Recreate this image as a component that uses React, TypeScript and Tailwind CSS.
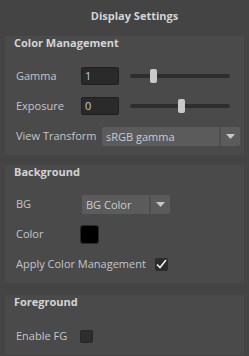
import React from 'react';

const Label = ({ children, w = 'w-[65px]' }: { children: React.ReactNode; w?: string }) => (
  <span className={`${w} shrink-0 text-[11px] text-[#c3c7cb]`}>{children}</span>
);

const NumField = ({ value }: { value: string }) => (
  <div className="w-[38px] h-[18px] bg-[#2a2a2a] border border-[#1f1f1f] rounded-[2px] text-[11px] leading-[16px] pl-[3px] text-[#c8cdd2]">
    {value}
  </div>
);

const Slider = ({ pos }: { pos: number }) => (
  <div className="relative ml-[11px] w-[100px] h-[14px] flex items-center">
    <div className="w-full h-[4px] rounded-full bg-[#2e2e2e]" />
    <div
      className="absolute top-0 w-[7px] h-[14px] rounded-[2px] bg-[#c9c9c9]"
      style={{ left: pos }}
    />
  </div>
);

const Dropdown = ({ text, width }: { text: string; width: string }) => (
  <div className={`${width} h-[19px] flex rounded-[2px] bg-[#5b5b5b] text-[11px] text-[#c8cdd2]`}>
    <span className="flex-1 pl-[4px] leading-[19px] border-r-2 border-[#4f4f4f]">{text}</span>
    <span className="w-[19px] flex items-center justify-center">
      <svg width="9" height="5" viewBox="0 0 9 5">
        <path d="M0 0H9L4.5 5Z" fill="#c8c8c8" />
      </svg>
    </span>
  </div>
);

const Group = ({ title, children, extra }: { title: string; children: React.ReactNode; extra: string }) => (
  <div className={`bg-[#4a4a4a] ${extra}`}>
    <div className="-mt-[5px] h-[14px] leading-[14px] pl-[9px] text-[11px] font-bold text-[#d2d4d6]">{title}</div>
    {children}
  </div>
);

export default function App() {
  return (
    <div
      className="w-[249px] h-[356px] overflow-hidden bg-[#444444] px-[5px]"
      style={{ fontFamily: '"Open Sans", "Noto Sans", sans-serif' }}
    >
      <div className="h-[33px] flex items-center justify-center pl-[20px] text-[11px] font-bold text-[#d2d4d6]">
        Display Settings
      </div>
      <Group title="Color Management" extra="mt-[8px] pb-[4px]">
        <div className="mt-[11px] pl-[11px]">
          <div className="h-[30px] flex items-center">
            <Label>Gamma</Label>
            <NumField value="1" />
            <Slider pos={20} />
          </div>
          <div className="h-[30px] flex items-center">
            <Label>Exposure</Label>
            <NumField value="0" />
            <Slider pos={48} />
          </div>
          <div className="h-[30px] flex items-center">
            <Label w="w-[86px]">View Transform</Label>
            <Dropdown text="sRGB gamma" width="w-[138px]" />
          </div>
        </div>
      </Group>
      <Group title="Background" extra="mt-[15px] pb-[4px]">
        <div className="mt-[10px] pl-[11px]">
          <div className="h-[30px] flex items-center">
            <Label w="w-[66px]">BG</Label>
            <Dropdown text="BG Color" width="w-[88px]" />
          </div>
          <div className="h-[30px] flex items-center">
            <Label w="w-[64px]">Color</Label>
            <div className="w-[19px] h-[19px] bg-black border border-[#2a2a2a] rounded-[3px]" />
          </div>
          <div className="h-[30px] flex items-center">
            <span className="text-[11px] text-[#c3c7cb] mr-[9px]">Apply Color Management</span>
            <div className="w-[13px] h-[13px] bg-[#2b2b2b] rounded-[2px] flex items-center justify-center">
              <svg width="11" height="10" viewBox="0 0 11 10">
                <path d="M1 5.5L4 8.5L10 1" stroke="#f0f0f0" strokeWidth="1.6" fill="none" />
              </svg>
            </div>
          </div>
        </div>
      </Group>
      <Group title="Foreground" extra="mt-[17px] h-[60px]">
        <div className="mt-[12px] pl-[11px]">
          <div className="h-[30px] flex items-center">
            <Label w="w-[64px]">Enable FG</Label>
            <div className="w-[13px] h-[13px] bg-[#2e2e2e] rounded-[2px] border border-[#262626]" />
          </div>
        </div>
      </Group>
    </div>
  );
}
